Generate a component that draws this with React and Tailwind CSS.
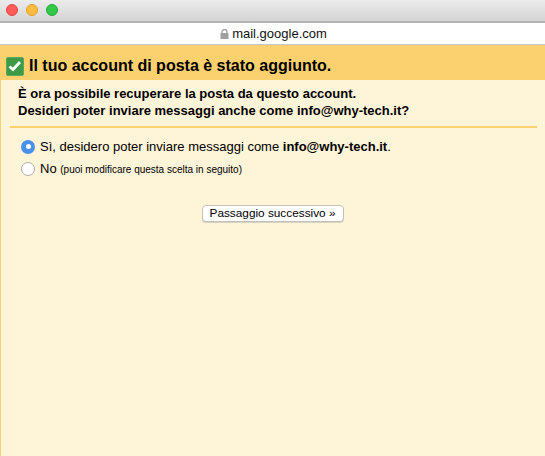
const sans = { fontFamily: '"Liberation Sans", Arial, sans-serif' };

function TrafficLight({ color, border }) {
  return <span className={`block w-3 h-3 rounded-full border ${color} ${border}`} />;
}

function CheckBadge() {
  return (
    <span className="flex items-center justify-center w-[18px] h-[19px] rounded-[2px] bg-[#3f9a45] border border-[#5aa85a] shrink-0">
      <svg width="14" height="12" viewBox="0 0 14 12">
        <path d="M1.5 6.5 L5 9.5 L12 2" fill="none" stroke="#fff" strokeWidth="2.8" />
      </svg>
    </span>
  );
}

function LockIcon() {
  return (
    <svg width="9" height="10" viewBox="0 0 9 10">
      <path d="M2 4.5 V3 a2.5 2.5 0 0 1 5 0 V4.5" fill="none" stroke="#a0a0a0" strokeWidth="1.3" />
      <rect x="0.5" y="4" width="8" height="6" fill="#a0a0a0" />
    </svg>
  );
}

export default function App() {
  return (
    <div className="w-[545px] h-[456px] overflow-hidden flex flex-col text-black bg-[#fef4d8]" style={sans}>
      {/* Browser title bar */}
      <div className="h-[23px] shrink-0 flex items-start pt-[4px] gap-2 pl-[6px] bg-gradient-to-b from-[#ececec] to-[#d4d4d4] border-b-2 border-[#b4b4b4]">
        <TrafficLight color="bg-[#fc5b57]" border="border-[#e3453f]" />
        <TrafficLight color="bg-[#fdbc40]" border="border-[#e09e2e]" />
        <TrafficLight color="bg-[#34c84a]" border="border-[#25a834]" />
      </div>

      {/* Address bar */}
      <div className="h-[22px] shrink-0 flex items-center justify-center gap-[3px] pl-[2px] bg-white border-b border-[#c8c8c8] text-[13px] text-[#111]">
        <LockIcon />
        <span>mail.google.com</span>
      </div>

      {/* Gmail dialog */}
      <div className="flex-1 flex flex-col border-l border-[#fbd06f]">
        <div className="h-[35px] shrink-0 flex items-center gap-[5px] pl-[6px] pt-[7px] -ml-px bg-[#fbd06f] text-[16px] font-bold">
          <CheckBadge />
          <span>Il tuo account di posta è stato aggiunto.</span>
        </div>

        <div className="pl-[17px] pt-[5px] text-[13px] leading-[17px] font-bold">
          <p>È ora possibile recuperare la posta da questo account.</p>
          <p>Desideri poter inviare messaggi anche come info@why-tech.it?</p>
        </div>

        <div className="h-[2px] mt-[7px] ml-[9px] mr-[8px] bg-[#fbd06f]" />

        <div className="pl-[20px] pt-[10px] flex flex-col gap-[5px] text-[13px]">
          <div className="flex items-center gap-[5px] h-[17px]">
            <span className="flex items-center justify-center w-[14px] h-[14px] rounded-full bg-[#4a90ee]">
              <span className="w-[5px] h-[5px] rounded-full bg-white" />
            </span>
            <span>Sì, desidero poter inviare messaggi come <b>info@why-tech.it</b>.</span>
          </div>
          <div className="flex items-center gap-[5px] h-[17px]">
            <span className="w-[14px] h-[14px] rounded-full bg-white border border-[#b0b0b0]" />
            <span>
              No <span className="text-[10px]">(puoi modificare questa scelta in seguito)</span>
            </span>
          </div>
        </div>

        <div className="flex justify-center pt-[28px]">
          <button className="h-[17px] w-[142px] flex items-center justify-center pr-[1px] rounded-[4px] bg-white border border-[#c4c0b4] shadow-[0_1px_0_#d8d4c4] text-[11.8px]">
            Passaggio successivo »
          </button>
        </div>
      </div>
    </div>
  );
}
